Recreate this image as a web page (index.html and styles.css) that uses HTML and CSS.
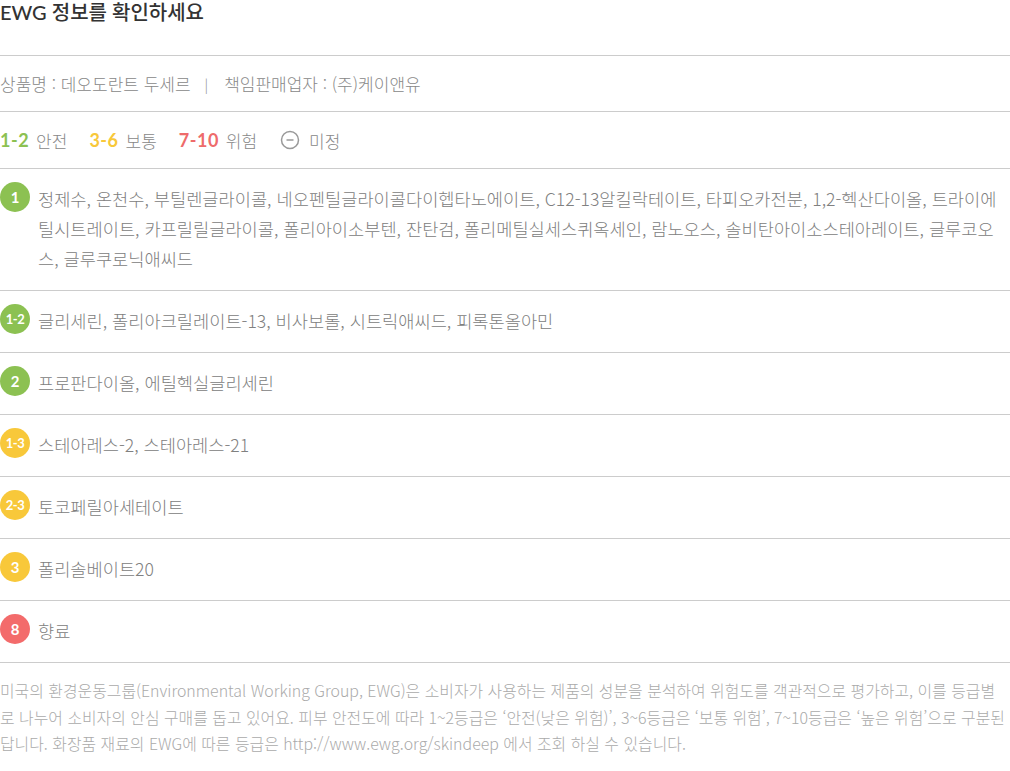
FILE: index.html
```html
<!DOCTYPE html>
<html lang="ko">
<head>
  <meta charset="UTF-8">
  <meta name="viewport" content="width=device-width, initial-scale=1">
  <title>EWG 정보</title>
  <link rel="stylesheet" href="styles.css">
</head>
<body>
  <div class="ewg">
    <h2 class="ewg-title">EWG 정보를 확인하세요</h2>

    <div class="ewg-product">
      <span>상품명 : 데오도란트 두세르</span>
      <span class="bar">|</span>
      <span>책임판매업자 : (주)케이앤유</span>
    </div>

    <div class="ewg-legend">
      <span class="legend-item"><b class="green">1-2</b> 안전</span>
      <span class="legend-item"><b class="yellow">3-6</b> 보통</span>
      <span class="legend-item"><b class="red">7-10</b> 위험</span>
      <span class="legend-item">
        <svg class="minus-icon" width="20" height="20" viewBox="0 0 20 20">
          <circle cx="10" cy="10" r="8.5" fill="none" stroke="#999" stroke-width="1.5"/>
          <line x1="6.5" y1="10" x2="13.5" y2="10" stroke="#999" stroke-width="1.5"/>
        </svg>
        미정
      </span>
    </div>

    <ul class="ingredients">
      <li class="row">
        <span class="badge green-bg">1</span>
        <p>정제수, 온천수, 부틸렌글라이콜, 네오펜틸글라이콜다이헵타노에이트, C12-13알킬락테이트, 타피오카전분, 1,2-헥산다이올, 트라이에틸시트레이트, 카프릴릴글라이콜, 폴리아이소부텐, 잔탄검, 폴리메틸실세스퀴옥세인, 람노오스, 솔비탄아이소스테아레이트, 글루코오스, 글루쿠로닉애씨드</p>
      </li>
      <li class="row">
        <span class="badge green-bg small">1-2</span>
        <p>글리세린, 폴리아크릴레이트-13, 비사보롤, 시트릭애씨드, 피록톤올아민</p>
      </li>
      <li class="row">
        <span class="badge green-bg">2</span>
        <p>프로판다이올, 에틸헥실글리세린</p>
      </li>
      <li class="row">
        <span class="badge yellow-bg small">1-3</span>
        <p>스테아레스-2, 스테아레스-21</p>
      </li>
      <li class="row">
        <span class="badge yellow-bg small">2-3</span>
        <p>토코페릴아세테이트</p>
      </li>
      <li class="row">
        <span class="badge yellow-bg">3</span>
        <p>폴리솔베이트20</p>
      </li>
      <li class="row">
        <span class="badge red-bg">8</span>
        <p>향료</p>
      </li>
    </ul>

    <p class="ewg-note">미국의 환경운동그룹(Environmental Working Group, EWG)은 소비자가 사용하는 제품의 성분을 분석하여 위험도를 객관적으로 평가하고, 이를 등급별로 나누어 소비자의 안심 구매를 돕고 있어요. 피부 안전도에 따라 1~2등급은 ‘안전(낮은 위험)’, 3~6등급은 ‘보통 위험’, 7~10등급은 ‘높은 위험’으로 구분된답니다. 화장품 재료의 EWG에 따른 등급은 http://www.ewg.org/skindeep 에서 조회 하실 수 있습니다.</p>
  </div>
</body>
</html>
```

FILE: styles.css
```css
body {
  margin: 0;
  padding: 0;
  background: #fff;
  font-family: "Noto Sans CJK KR", "Noto Sans", sans-serif;
  color: #777;
}

.ewg {
  width: 1010px;
}

.ewg-title {
  margin: 0;
  height: 55px;
  line-height: 24px;
  font-size: 20px;
  font-weight: 500;
  color: #333;
  border-bottom: 1px solid #ccc;
  font-family: "Lato", "Noto Sans CJK KR", sans-serif;
}

.ewg-product {
  height: 55px;
  display: flex;
  align-items: center;
  font-size: 17px;
  font-weight: 300;
  color: #888;
  border-bottom: 1px solid #ccc;
}

.ewg-product .bar {
  margin: 0 16px 0 14px;
  font-size: 14px;
}

.ewg-legend {
  height: 56px;
  display: flex;
  align-items: center;
  gap: 22px;
  font-size: 17px;
  font-weight: 300;
  color: #888;
  border-bottom: 1px solid #ccc;
}

.legend-item {
  display: flex;
  align-items: center;
  gap: 7px;
}

.legend-item b {
  font-family: "Lato", sans-serif;
  font-weight: 700;
  font-size: 18px;
  letter-spacing: 0.5px;
}

.minus-icon {
  margin-left: 1px;
  margin-right: 2px;
}

.green { color: #8cc152; }
.yellow { color: #f8c83a; }
.red { color: #ee6b6b; }

.green-bg { background: #8cc152; }
.yellow-bg { background: #f8c83a; }
.red-bg { background: #f36b6b; }

.ingredients {
  list-style: none;
  margin: 0;
  padding: 0;
}

.row {
  display: flex;
  align-items: flex-start;
  gap: 8px;
  padding: 15px 0 16px;
  border-bottom: 1px solid #ccc;
}

.row p {
  margin: 0;
  flex: 1;
  font-size: 17.6px;
  font-weight: 300;
  line-height: 30px;
  color: #808080;
}

.badge {
  flex: none;
  width: 30px;
  height: 30px;
  border-radius: 50%;
  display: flex;
  align-items: center;
  justify-content: center;
  color: #fff;
  font-family: "Lato", sans-serif;
  font-weight: 700;
  font-size: 15px;
  margin-top: -2px;
}

.badge.small {
  font-size: 13px;
  letter-spacing: -0.5px;
}

.ewg-note {
  margin: 0;
  padding: 15px 2px 0 0;
  font-size: 15.9px;
  font-weight: 300;
  line-height: 26.5px;
  color: #aaa;
}
```
